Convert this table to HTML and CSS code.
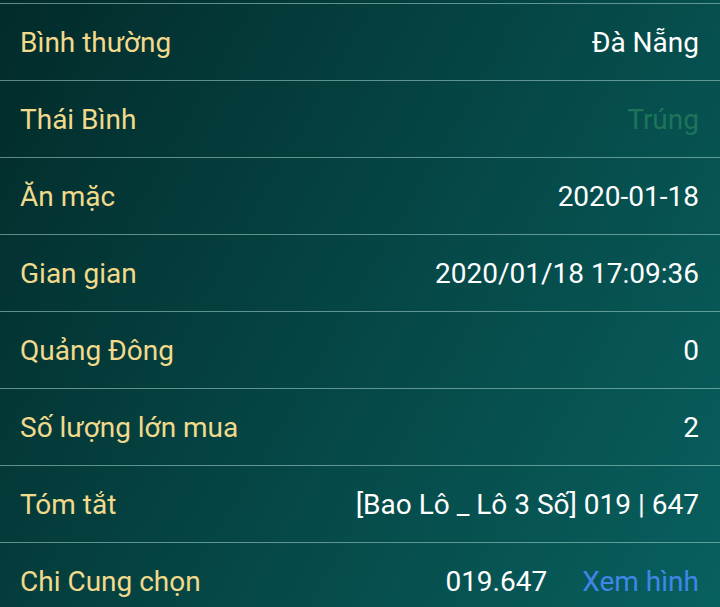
FILE: index.html
```html
<!DOCTYPE html>
<html lang="vi">
<head>
<meta charset="utf-8">
<link rel="stylesheet" href="styles.css">
</head>
<body>
<div class="list">
  <div class="row"><span class="label">Bình thường</span><span class="value">Đà Nẵng</span></div>
  <div class="row"><span class="label">Thái Bình</span><span class="value win">Trúng</span></div>
  <div class="row"><span class="label">Ăn mặc</span><span class="value">2020-01-18</span></div>
  <div class="row"><span class="label">Gian gian</span><span class="value">2020/01/18 17:09:36</span></div>
  <div class="row"><span class="label">Quảng Đông</span><span class="value">0</span></div>
  <div class="row"><span class="label">Số lượng lớn mua</span><span class="value">2</span></div>
  <div class="row"><span class="label">Tóm tắt</span><span class="value">[Bao Lô _ Lô 3 Số] 019 | 647</span></div>
  <div class="row"><span class="label">Chi Cung chọn</span><span class="value group"><span>019.647</span><span class="link">Xem hình</span></span></div>
</div>
</body>
</html>
```
FILE: styles.css
```css
html, body {
  margin: 0;
  padding: 0;
  height: 100%;
  overflow: hidden;
}
body {
  background: linear-gradient(120deg, #022b2a 0%, #054645 50%, #08605f 100%);
  font-family: Roboto, "Noto Sans", sans-serif;
  font-size: 28px;
}
.list {
  padding-top: 3px;
}
.row {
  display: flex;
  align-items: center;
  justify-content: space-between;
  height: 76px;
  border-top: 1px solid rgba(170, 215, 210, 0.55);
  padding: 0 21px 0 20px;
}
.label {
  color: #f1da8b;
}
.value {
  color: #ffffff;
}
.value.win {
  color: #1d7459;
}
.group {
  display: flex;
  gap: 35px;
}
.link {
  color: #3f86e8;
}
```
